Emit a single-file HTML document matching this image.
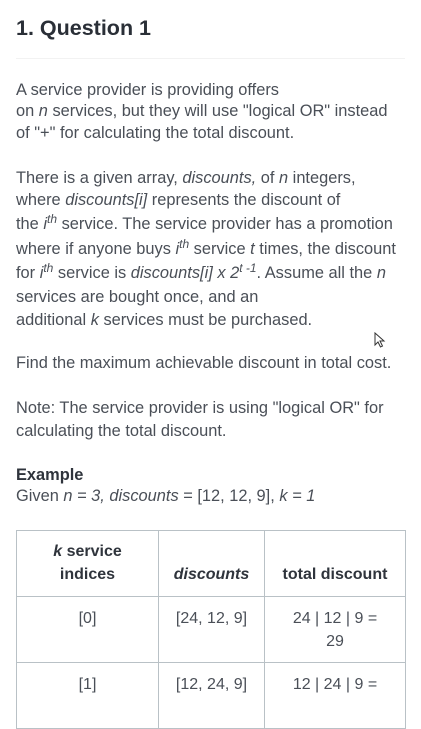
<!DOCTYPE html>
<html><head><meta charset="utf-8"><style>
body{margin:0;width:421px;height:682px;background:#fff;position:relative;overflow:hidden;font-family:"Liberation Sans",sans-serif;color:#4a4f57;}
.l{position:absolute;left:16px;font-size:16.4px;line-height:22px;white-space:nowrap;}
i{font-style:italic}
sup{font-size:12px;vertical-align:6px;line-height:0}
h1{position:absolute;left:16px;top:16px;margin:0;font-size:21.5px;font-weight:bold;color:#2a2f37;}
.hr{position:absolute;left:16px;right:16px;top:58px;height:1px;background:#f2f2f2}
table{position:absolute;left:16px;top:530px;border-collapse:collapse;font-size:16px;}
td,th{border:1px solid #b9c1c6;text-align:center;vertical-align:top;padding:0;}
th{font-weight:bold;color:#2f343c;vertical-align:bottom;padding-bottom:10px;line-height:23px}
td{padding-top:10px;line-height:23px}
</style></head><body>
<h1>1. Question 1</h1>
<div class="hr"></div>
<div class="l" style="top:79px">A service provider is providing offers</div>
<div class="l" style="top:100px">on <i>n</i> services, but they will use "logical OR" instead</div>
<div class="l" style="top:122px">of "+" for calculating the total discount.</div>
<div class="l" style="top:167px">There is a given array, <i>discounts,</i> of <i>n</i> integers,</div>
<div class="l" style="top:189px">where <i>discounts[i]</i> represents the discount of</div>
<div class="l" style="top:213px">the <i>i<sup>th</sup></i> service. The service provider has a promotion</div>
<div class="l" style="top:238px">where if anyone buys <i>i<sup>th</sup></i> service <i>t</i> times, the discount</div>
<div class="l" style="top:262px">for <i>i<sup>th</sup></i> service is <i>discounts[i] x 2<sup>t -1</sup></i>. Assume all the <i>n</i></div>
<div class="l" style="top:286px">services are bought once, and an</div>
<div class="l" style="top:309px">additional <i>k</i> services must be purchased.</div>
<svg style="position:absolute;left:374px;top:332px" width="12" height="16" viewBox="0 0 12 16"><path d="M1 1 L1 13 L4 10 L6.5 15 L8.5 14 L6 9 L10 9 Z" fill="#fff" stroke="#333" stroke-width="1"/></svg>
<div class="l" style="top:352px">Find the maximum achievable discount in total cost.</div>
<div class="l" style="top:397px">Note: The service provider is using "logical OR" for</div>
<div class="l" style="top:420px">calculating the total discount.</div>
<div class="l" style="top:464px;font-weight:bold;color:#2f343c">Example</div>
<div class="l" style="top:485px">Given <i>n = 3, discounts</i> = [12, 12, 9], <i>k = 1</i></div>
<table>
<tr style="height:66px"><th style="width:141px"><i>k</i> service<br>indices</th><th style="width:105px"><i>discounts</i></th><th style="width:140px">total discount</th></tr>
<tr style="height:66px"><td>[0]</td><td>[24, 12, 9]</td><td>24 | 12 | 9 =<br>29</td></tr>
<tr style="height:66px"><td>[1]</td><td>[12, 24, 9]</td><td>12 | 24 | 9 =</td></tr>
</table>
</body></html>
